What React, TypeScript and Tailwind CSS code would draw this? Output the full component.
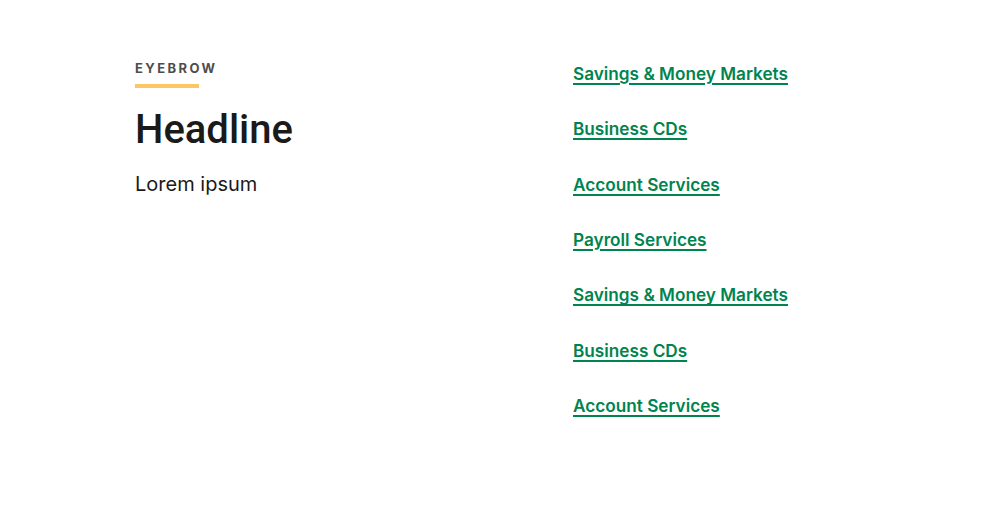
export default function App() {
  const links = [
    "Savings & Money Markets",
    "Business CDs",
    "Account Services",
    "Payroll Services",
    "Savings & Money Markets",
    "Business CDs",
    "Account Services",
  ];
  return (
    <div className="w-[990px] h-[509px] bg-white flex" style={{ fontFamily: "Inter, 'Noto Sans', sans-serif" }}>
      <div className="w-[573px] shrink-0 pl-[135px] pt-[60px] flex flex-col">
        <div className="text-[13px] font-bold tracking-[2.4px] text-[#4d4d4d] leading-[16px]">EYEBROW</div>
        <div className="mt-[8px] w-[64px] h-[4px] bg-[#fdc662]" />
        <h1 className="mt-[18px] text-[40px] leading-[48px] font-medium text-[#1a1a1a]" style={{ fontFamily: "Roboto, sans-serif" }}>Headline</h1>
        <p className="mt-[16px] text-[20px] leading-[28px] text-[#1a1a1a]">Lorem ipsum</p>
      </div>
      <div className="pt-[62px] flex flex-col gap-[31.33px]">
        {links.map((l, i) => (
          <a key={i} href="#" className="text-[17.2px] leading-[24px] font-semibold text-[#00844f] underline underline-offset-[3px] decoration-[1.5px] self-start">
            {l}
          </a>
        ))}
      </div>
    </div>
  );
}
